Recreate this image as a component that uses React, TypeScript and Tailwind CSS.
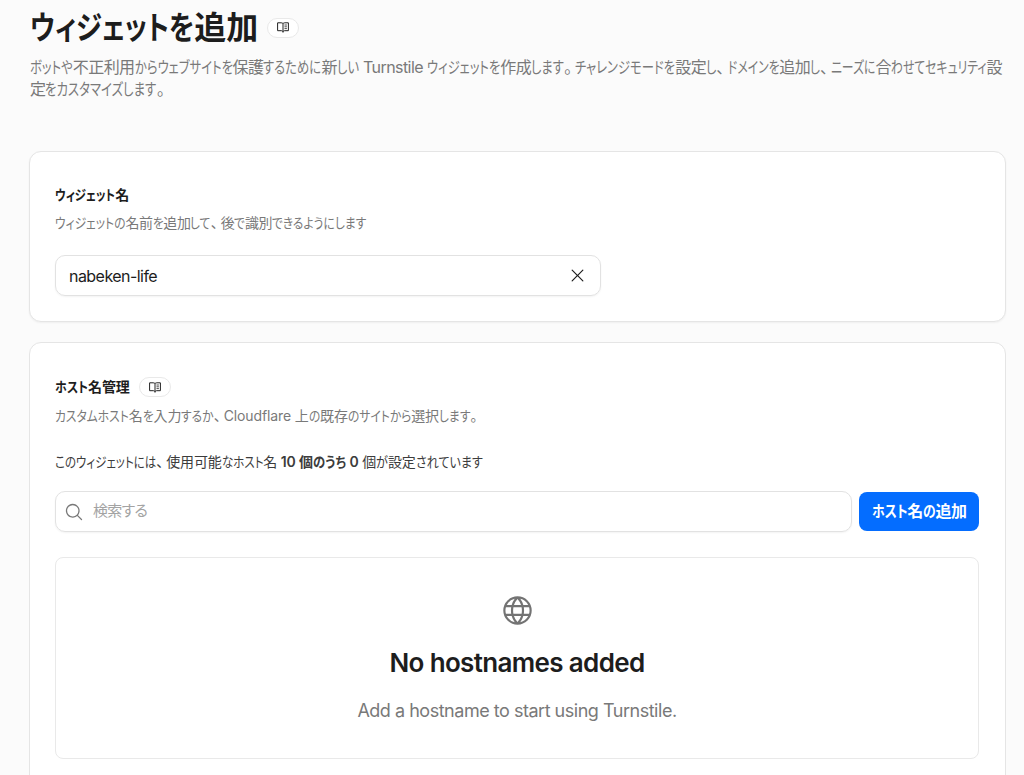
import { useLayoutEffect, useRef, useState } from "react";
import { PiGlobe, PiMagnifyingGlass, PiX } from "react-icons/pi";

// Condenses a run of kana and gives the freed width back to the line
function Kana({ text, scale }: { text: string; scale: number }) {
  const ref = useRef<HTMLSpanElement>(null);

  useLayoutEffect(() => {
    const el = ref.current;
    if (!el) return;
    el.style.marginRight = `${-(1 - scale) * el.offsetWidth}px`;
  }, [text, scale]);

  return (
    <span
      ref={ref}
      className="inline-block origin-left tracking-normal"
      style={{ transform: `scaleX(${scale})` }}
    >
      {text}
    </span>
  );
}

function Ja({ text, scale = 0.84 }: { text: string; scale?: number }) {
  const runs = text.match(/[ぁ-ヿ]+|[、。]|[^ぁ-ヿ、。]+/g) ?? [];
  return (
    <>
      {runs.map((run, i) => {
        if (/[、。]/.test(run)) return <span key={i} className="tracking-[0.2em]">{run}</span>;
        if (/[ぁ-ヿ]/.test(run)) return <Kana key={i} text={run} scale={scale} />;
        return <span key={i}>{run}</span>;
      })}
    </>
  );
}

function DocsBadge() {
  return (
    <a
      href="#docs"
      aria-label="ドキュメント"
      className="flex h-5 w-8 shrink-0 items-center justify-center rounded-full border border-[#e9e9e9] bg-white text-[#222]"
    >
      <svg width="12" height="11" viewBox="0 0 12 11" fill="none" stroke="currentColor">
        <path d="M6 1.6C5.5 1 4.9.8 4.2.8H.6v7.9h3.8c.8 0 1.3.3 1.6.9.3-.6.8-.9 1.6-.9h3.8V.8H7.8C7.1.8 6.5 1 6 1.6v9" />
        <path d="M7.5 3h2.4M7.5 4.8h2.4M7.5 6.6h2.4" strokeWidth=".8" />
      </svg>
    </a>
  );
}

export default function App() {
  const [name, setName] = useState("nabeken-life");
  const [query, setQuery] = useState("");

  return (
    <div className="h-[775px] overflow-hidden bg-[#fbfbfb] pr-[18px] pl-[29px] font-['Inter','Noto_Sans_CJK_JP',sans-serif] tracking-[-0.03em] text-[#1d1d1d] [font-feature-settings:'palt']">
      <header className="h-[151px] pt-1.5 pl-px">
        <div className="flex h-[43px] items-center gap-[9px]">
          <h1 className="text-[32px] font-semibold tracking-normal whitespace-nowrap">
            <Ja text="ウィジェットを追加" scale={0.82} />
          </h1>
          <DocsBadge />
        </div>
        <p className="mt-[7px] text-base leading-[22px] tracking-[-0.035em] whitespace-nowrap text-[#797979]">
          <Ja
            text="ボットや不正利用からウェブサイトを保護するために新しい Turnstile ウィジェットを作成します。チャレンジモードを設定し、"
            scale={0.77}
          />
          <Ja text="ドメインを追加し、ニーズに合わせてセキュリティ設" scale={0.74} />
          <br />
          <Ja text="定をカスタマイズします。" scale={0.775} />
        </p>
      </header>

      <section className="h-[171px] rounded-xl border border-[#e5e5e5] bg-white px-[25px] pt-8 shadow-xs">
        <h2 className="text-sm leading-[22px] font-semibold">
          <Ja text="ウィジェット名" scale={0.81} />
        </h2>
        <p className="mt-1.5 text-sm leading-[22px] text-[#797979]">
          <Ja text="ウィジェットの名前を追加して、後で識別できるようにします" />
        </p>
        <div className="mt-[21px] flex h-[41px] w-[546px] items-center rounded-[10px] border border-[#e2e2e2] px-[13px] shadow-xs">
          <input
            value={name}
            onChange={(e) => setName(e.target.value)}
            className="min-w-0 flex-1 text-base tracking-[-0.034em] outline-none"
          />
          <button onClick={() => setName("")} aria-label="クリア">
            <PiX size={19} />
          </button>
        </div>
      </section>

      <section className="mt-5 h-[460px] rounded-xl border border-[#e5e5e5] bg-white px-[25px] pt-[33px]">
        <div className="flex h-[22px] items-center gap-[9px]">
          <h2 className="text-sm font-semibold tracking-[-0.01em]">
            <Ja text="ホスト名管理" scale={0.85} />
          </h2>
          <DocsBadge />
        </div>
        <p className="mt-[7px] text-sm leading-[22px] tracking-[-0.008em] text-[#797979]">
          <Ja text="カスタムホスト名を入力するか、Cloudflare 上の既存のサイトから選択します。" scale={0.84} />
        </p>
        <p className="mt-6 text-sm leading-[22px] tracking-[-0.01em] text-[#3c3c3c]">
          <Ja text="このウィジェットには、使用可能なホスト名 " scale={0.82} />
          <b className="font-semibold">
            <Ja text="10 個のうち 0" scale={0.88} />
          </b>
          <Ja text=" 個が設定されています" scale={0.86} />
        </p>
        <div className="mt-[18px] flex items-center gap-[7px]">
          <label className="flex h-[41px] w-[797px] items-center gap-[9px] rounded-[10px] border border-[#e2e2e2] px-2 text-[#797979] shadow-xs">
            <PiMagnifyingGlass size={20} />
            <input
              value={query}
              onChange={(e) => setQuery(e.target.value)}
              placeholder="検索する"
              className="min-w-0 flex-1 text-[15px] tracking-[-0.7px] outline-none placeholder:text-[#a3a3a3]"
            />
          </label>
          <button className="h-[39px] w-[120px] rounded-lg bg-[#046dff] pb-0.5 text-base font-semibold whitespace-nowrap text-white">
            <Ja text="ホスト名の追加" scale={0.8} />
          </button>
        </div>
        <div className="mt-[25px] mr-px flex h-[202px] flex-col items-center rounded-lg border border-[#e9e9e9] pt-[35px]">
          <PiGlobe size={35} className="text-[#737373]" />
          <h3 className="mt-[17px] text-[26px] leading-9 font-semibold tracking-tight">No hostnames added</h3>
          <p className="mt-4 text-lg leading-7 text-[#797979]">
            Add a hostname to start using Turnstile.
          </p>
        </div>
      </section>
    </div>
  );
}
